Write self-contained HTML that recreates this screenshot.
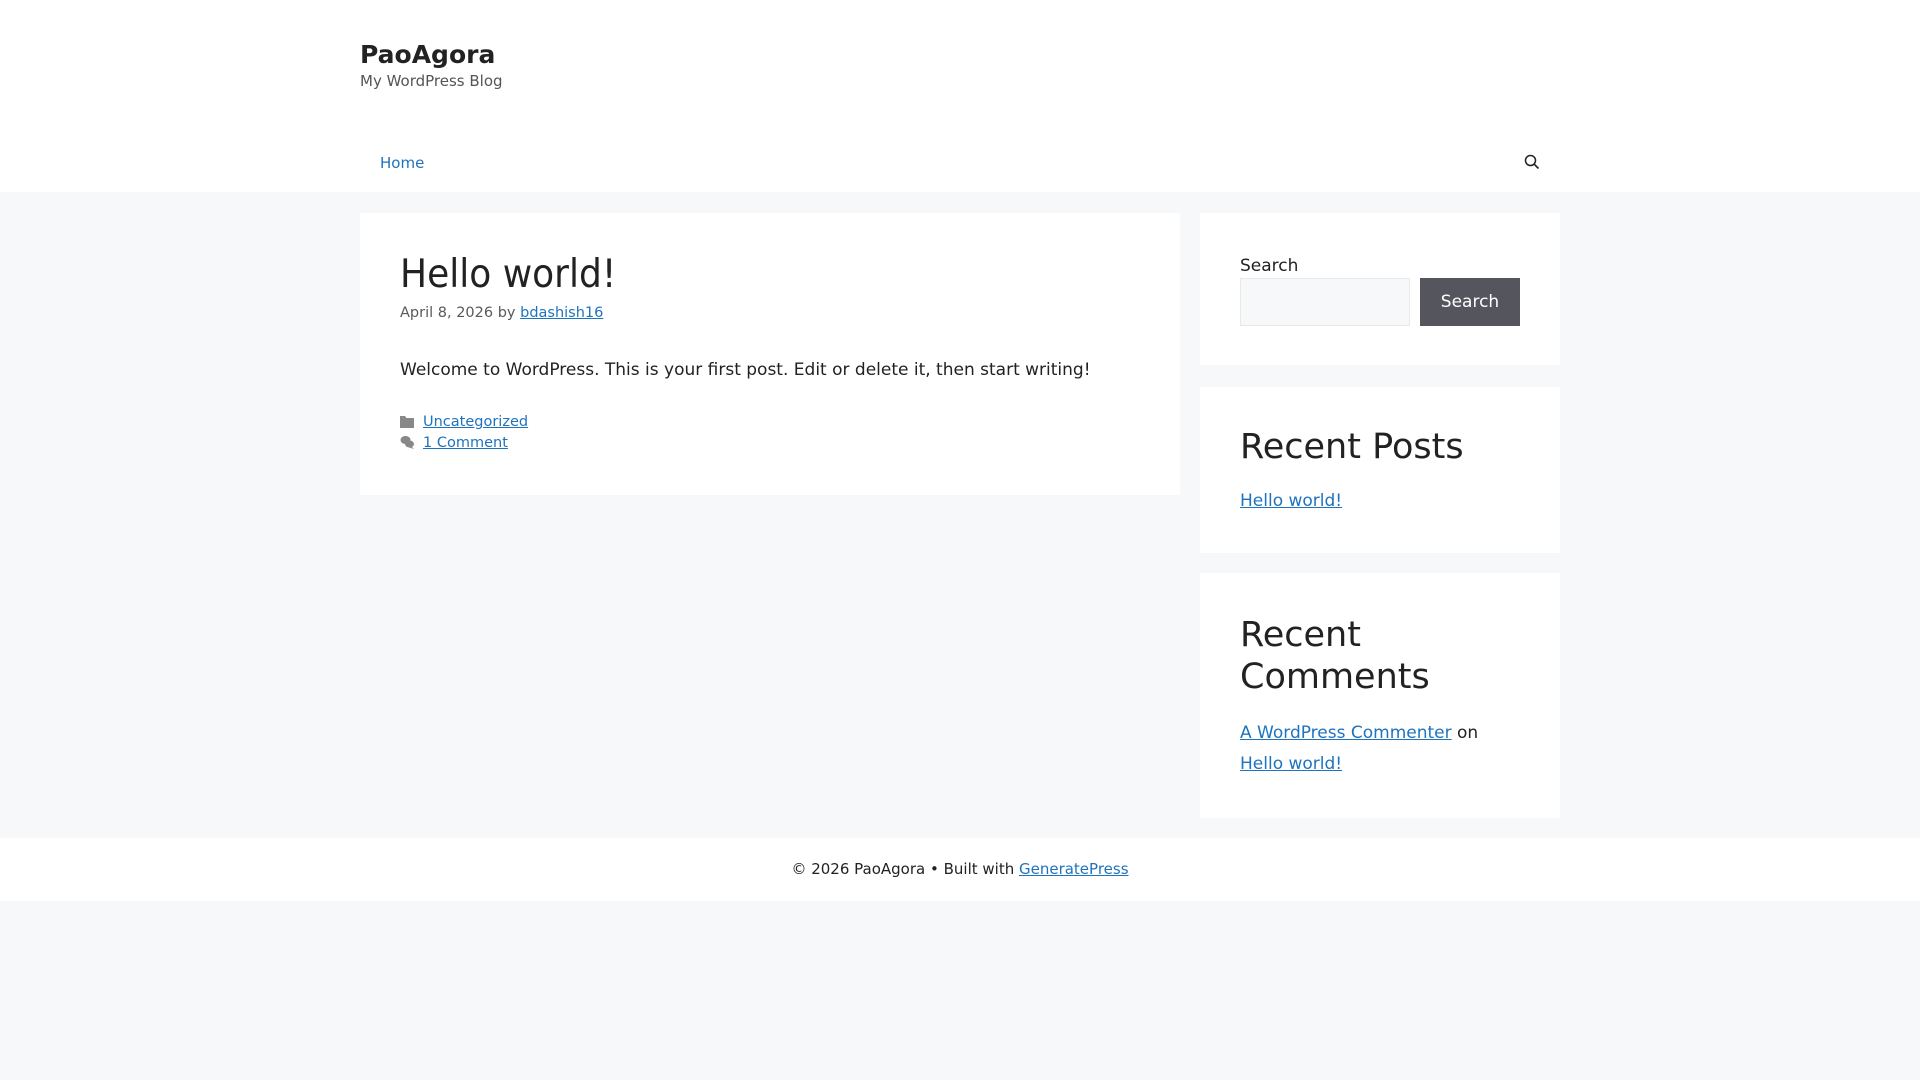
<!DOCTYPE html>
<html><head><meta charset="utf-8"><style>
*{box-sizing:border-box;margin:0;padding:0}
body{width:1920px;height:1080px;background:#f7f8f9;font-family:"DejaVu Sans","Liberation Sans",sans-serif;font-size:17px;line-height:1.5;color:#222;position:relative;overflow:hidden}
a{color:#1e73be}
.abs{position:absolute}
header{position:absolute;left:0;top:0;width:1920px;height:192px;background:#fff}
.box{position:absolute;background:#fff}
</style></head><body>
<header>
<div class="abs" style="left:360px;top:37px;font-size:25px;font-weight:bold;line-height:36px;color:#222">PaoAgora</div>
<div class="abs" style="left:360px;top:70px;font-size:15px;line-height:22px;color:#555">My WordPress Blog</div>
<div class="abs" style="left:380px;top:151px;font-size:15px;line-height:24px;color:#1e73be">Home</div>
<svg class="abs" style="left:1524px;top:154px" width="16" height="16" viewBox="0 0 16 16"><circle cx="6.5" cy="6.5" r="5" fill="none" stroke="#222" stroke-width="1.5"/><line x1="10.2" y1="10.2" x2="14.5" y2="14.5" stroke="#222" stroke-width="1.6"/></svg>
</header>

<div class="box" style="left:360px;top:213px;width:820px;height:282px">
<div class="abs" style="left:40px;top:38px;font-size:36px;line-height:48px;color:#222;transform:scaleY(1.1);transform-origin:left center">Hello world!</div>
<div class="abs" style="left:40px;top:89px;font-size:14.5px;line-height:22px;color:#595959">April 8, 2026 by <a href="#">bdashish16</a></div>
<div class="abs" style="left:40px;top:144px;line-height:26px">Welcome to WordPress. This is your first post. Edit or delete it, then start writing!</div>
<svg class="abs" style="left:40px;top:202px" width="14" height="13" viewBox="0 0 14 13"><path d="M0 1h5l1.5 2H14v10H0z" fill="#888"/></svg>
<div class="abs" style="left:63px;top:198px;font-size:14.5px;line-height:22px"><a href="#">Uncategorized</a></div>
<svg class="abs" style="left:40px;top:222px" width="15" height="15" viewBox="0 0 15 15"><ellipse cx="5.5" cy="5" rx="5" ry="4" fill="#888"/><ellipse cx="9.5" cy="9" rx="4.5" ry="3.5" fill="#888"/><path d="M11 11l3 3-5-1.5z" fill="#888"/></svg>
<div class="abs" style="left:63px;top:219px;font-size:14.5px;line-height:22px"><a href="#">1 Comment</a></div>
</div>

<div class="box" style="left:1200px;top:213px;width:360px;height:152px">
<div class="abs" style="left:40px;top:40px;line-height:26px">Search</div>
<div class="abs" style="left:40px;top:65px;width:170px;height:48px;background:#f7f8f9;border:1px solid #e8e8e8"></div>
<div class="abs" style="left:220px;top:65px;width:100px;height:48px;background:#55555e;color:#fff;text-align:center;line-height:48px">Search</div>
</div>

<div class="box" style="left:1200px;top:387px;width:360px;height:166px">
<div class="abs" style="left:40px;top:37px;font-size:35px;line-height:46px;white-space:nowrap">Recent Posts</div>
<div class="abs" style="left:40px;top:101px;line-height:26px"><a href="#">Hello world!</a></div>
</div>

<div class="box" style="left:1200px;top:573px;width:360px;height:245px">
<div class="abs" style="left:40px;top:41px;font-size:35px;line-height:42px">Recent<br>Comments</div>
<div class="abs" style="left:40px;top:145px;line-height:31px"><a href="#">A WordPress Commenter</a> on<br><a href="#">Hello world!</a></div>
</div>

<div class="abs" style="left:0;top:838px;width:1920px;height:63px;background:#fff;text-align:center;font-size:15px;line-height:63px;color:#222">© 2026 PaoAgora • Built with <a href="#">GeneratePress</a></div>
</body></html>
